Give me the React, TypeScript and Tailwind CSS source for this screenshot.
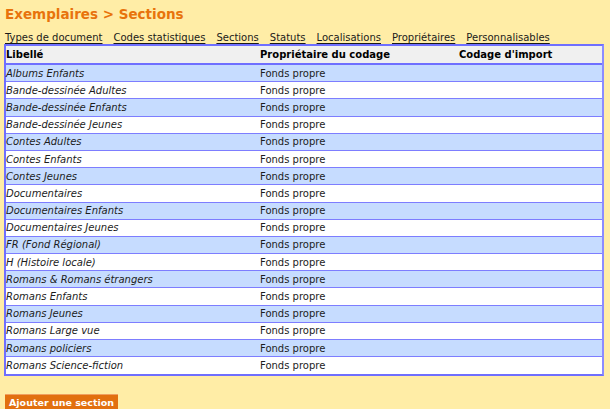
const sections = [
  'Albums Enfants',
  'Bande-dessinée Adultes',
  'Bande-dessinée Enfants',
  'Bande-dessinée Jeunes',
  'Contes Adultes',
  'Contes Enfants',
  'Contes Jeunes',
  'Documentaires',
  'Documentaires Enfants',
  'Documentaires Jeunes',
  'FR (Fond Régional)',
  'H (Histoire locale)',
  'Romans & Romans étrangers',
  'Romans Enfants',
  'Romans Jeunes',
  'Romans Large vue',
  'Romans policiers',
  'Romans Science-fiction',
];

const tabs = [
  'Types de document',
  'Codes statistiques',
  'Sections',
  'Statuts',
  'Localisations',
  'Propriétaires',
  'Personnalisables',
];

const App = () => {
  return (
    <div className="w-[610px] h-[409px] overflow-hidden bg-[#ffeda6] text-[10px] text-black font-['DejaVu_Sans',Verdana,sans-serif]">
      <h1 className="pl-[5px] pt-[5px] h-[31px] text-[13.5px] font-bold leading-[18px] text-[#e8730c]">
        Exemplaires &gt; Sections
      </h1>

      {/* onglets */}
      <div className="flex gap-[11px] pl-[5px] h-[13px] leading-[13px]">
        {tabs.map((t) => (
          <a key={t} href="#" className="underline underline-offset-[2px] text-[#1a1a1a]">
            {t}
          </a>
        ))}
      </div>

      <div className="ml-[4px] w-[600px] border-2 border-[#6f6fff] border-r-[#8c8cff]">
        <div className="flex h-[19px] items-center bg-[#f0f0f0] border-b-2 border-[#6f6fff] font-bold">
          <div className="w-[254px]">Libellé</div>
          <div className="w-[199px]">Propriétaire du codage</div>
          <div>Codage d'import</div>
        </div>
        {sections.map((s, i) => (
          <div
            key={s}
            className={
              'flex h-[17.2px] items-center border-b border-[#7d7dff] last:border-b-0 text-[#1c1c1c] ' +
              (i % 2 === 0 ? 'bg-[#c6dcff]' : 'bg-white')
            }
          >
            <div className="w-[254px] italic">{s}</div>
            <div className="w-[199px]">Fonds propre</div>
            <div></div>
          </div>
        ))}
      </div>

      <div className="pl-[5px] pt-[18px]">
        <button className="h-[15px] w-[113px] bg-[#e2700f] text-white font-bold text-[9.5px] leading-[15px] border-t border-[#f0a060]">
          Ajouter une section
        </button>
      </div>
    </div>
  );
};

export default App;
